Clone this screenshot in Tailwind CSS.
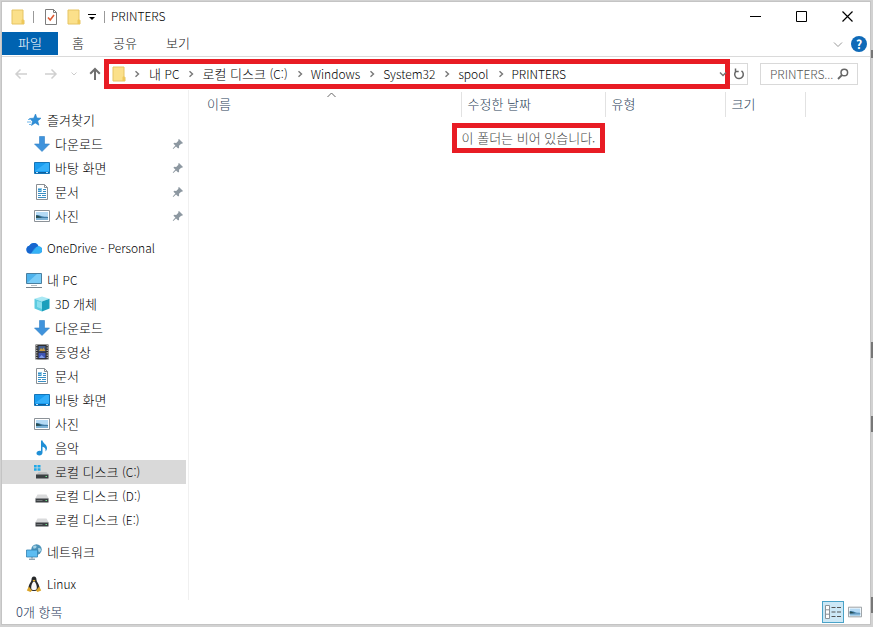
<!DOCTYPE html>
<html lang="ko">
<head>
    <meta charset="UTF-8">
    <meta name="viewport" content="width=device-width, initial-scale=1.0">
    <title>PRINTERS</title>
    <script src="https://cdn.jsdelivr.net/npm/@tailwindcss/browser@4"></script>
</head>
<body class="relative h-screen overflow-hidden bg-[#d2d2d2] pt-px pr-[2px] pb-[2px] pl-px font-['Noto_Sans_CJK_KR',sans-serif] text-[13px] leading-6 font-light text-black">
    <!-- icons -->
    <svg class="hidden">
        <symbol id="folder" viewBox="0 0 16 16">
            <path d="M2 1h11v9.500l1 1V15H2z" fill="#fbe08a" stroke="#e6c463" />
            <path d="M11.500 15v-4l1.500-1 1 1.500V15z" fill="#eec85a" />
        </symbol>
        <symbol id="next" viewBox="0 0 8 8">
            <path d="M2.500 1.200l3 2.800-3 2.800" fill="none" stroke="#777" stroke-width="1.400" />
        </symbol>
        <symbol id="star" viewBox="0 0 16 16">
            <path d="M9.500 2l1.400 4 4.100.2-3.300 2.700 1.200 4.300-3.700-2.300-3.700 2.600 1-4.300L3.500 6.500l4.200-.3z" fill="#2f8fd8" stroke="#2480c8" stroke-width=".6" />
            <path d="M2 7.500h3M1 10h4M3 12.500h2" stroke="#6fb6ea" />
        </symbol>
        <symbol id="download" viewBox="0 0 16 16">
            <path d="M5.500.5h5V8h5L8 15.500.5 8h5z" fill="#3f93dc" stroke="#2f7fc6" stroke-width=".6" />
        </symbol>
        <symbol id="desktop" viewBox="0 0 16 16">
            <path d="M.5 2.500h15v11H.5z" fill="#1a9df0" stroke="#1575b8" />
            <path d="M1 11L12 3h3v8z" fill="#35b0fa" />
            <path d="M1 12.500h14" stroke="#0f5f9c" />
            <path d="M2 12.500h2M12 12.500h2" stroke="#bfe3fa" />
        </symbol>
        <symbol id="document" viewBox="0 0 16 16">
            <path d="M2.500.5h8l3 3v12h-11z" fill="#fff" stroke="#8a8f94" />
            <path d="M10.500.5v3h3" fill="none" stroke="#8a8f94" />
            <path d="M4 4h4v4H4z" fill="#8cc8e8" />
            <path d="M4 5.500h3M9 5.500h3M4 7.500h3M9 7.500h3M4 9.500h8M4 11.500h3M8 11.500h4M4 13.500h8" stroke="#3b8fc4" />
        </symbol>
        <symbol id="picture" viewBox="0 0 16 16">
            <path d="M.5 2.500h15v11H.5z" fill="#fff" stroke="#8c9298" />
            <path d="M2 4h12v8H2z" fill="#b4daf5" />
            <path d="M2 7c3-.5 5 1 7 1.500s3 0 5 .5v1H2z" fill="#3f7ba6" />
            <path d="M2 7.500c2-.5 4 1 6 2l-6 .5z" fill="#274e52" />
            <path d="M2 10h12v2H2z" fill="#7fb3d6" />
        </symbol>
        <symbol id="pin" viewBox="0 0 12 12">
            <path d="M7 1l4 4-1 .8-.8-.1L7 7.800l.1 1.900-.9.900-2.200-2.200L1.300 11l-.6-.6L3.400 7.600 1.400 5.700l.9-.9 1.900.1L6.400 2.700 6.200 1.800z" fill="#8d98a1" />
        </symbol>
        <symbol id="cloud" viewBox="0 0 16 16">
            <path d="M4 13.500a4 4 0 0 1-.7-7.800A5 5 0 0 1 12.500 6.500a3.500 3.500 0 0 1 .5 7z" fill="#1e86e0" />
            <path d="M3.300 5.700A5 5 0 0 1 12.500 6.500C9 6.500 7.500 9 5 13.500H4a4 4 0 0 1-.7-7.800z" fill="#1766cf" />
            <path d="M5 13.500L10.500 7a3.600 3.600 0 0 1 5.300 4.500 3.200 3.200 0 0 1-2.800 2z" fill="#35b2f5" />
        </symbol>
        <symbol id="pc" viewBox="0 0 16 16">
            <path d="M.5 1.500h15v10H.5z" fill="#4db2ec" stroke="#4a7f9f" />
            <path d="M1 11L11 2h4v9z" fill="#7accf7" />
            <path d="M5 13.500h6" stroke="#b4bcc2" />
            <path d="M0 15.500h16" stroke="#78838b" />
        </symbol>
        <symbol id="cube" viewBox="0 0 16 16">
            <path d="M8 .5l7.500 2.300L8 5.500.5 2.800z" fill="#a9e8f4" />
            <path d="M.5 2.800L8 5.500v10L.5 12.600z" fill="#5ccbe0" />
            <path d="M15.500 2.800L8 5.500v10l7.500-2.900z" fill="#1c9fbc" />
            <path d="M3 5l5 1.500V13l-5-2z" fill="#8adfee" />
        </symbol>
        <symbol id="video" viewBox="0 0 16 16">
            <path d="M1.500.5h13v15h-13z" fill="#2e2e2e" />
            <path d="M2.800 1v15M13.200 1v15" stroke="#e8e8e8" stroke-dasharray="1.200 1.200" />
            <path d="M4.500 2h7v5.500h-7z" fill="#46608f" />
            <path d="M4.500 8.700h7v5.500h-7z" fill="#3d55b5" />
            <path d="M5 7l2-3 1.500 1.500 1-2L11.500 7z" fill="#c99b3f" />
            <path d="M5 14l2.500-3 3.500 3z" fill="#7e9be8" />
        </symbol>
        <symbol id="music" viewBox="0 0 16 16">
            <path d="M7 .5h1.500c.3 2.800 4.500 4 4.500 7.500 0 1.500-.6 2.600-1.500 3.500.6-3-.8-4.300-3-4.800v5.800c0 1.700-1.400 3-3.200 3S2.500 14.600 2.500 13.300s1.400-2.500 3-2.500c.6 0 1 .1 1.500.3z" fill="#1f8fd6" />
        </symbol>
        <symbol id="drive" viewBox="0 0 16 16">
            <path d="M3.500 6.500h9L15 11H1z" fill="#d9dadb" />
            <path d="M1.500 10.500h13v4h-13z" fill="#3b3f42" />
            <path d="M2.500 12.500h6" stroke="#75797c" />
            <path d="M11.500 12.500H13" stroke="#6fe08a" />
        </symbol>
        <symbol id="windrive" viewBox="0 0 16 16">
            <path d="M0 1h2.700v2.500H0zM3.500 1h3v2.500h-3zM0 4.300h2.700v2.500H0zM3.500 4.300h3v2.500h-3z" fill="#20a9e8" />
            <path d="M4.500 8h8l2.500 3H2z" fill="#bfc1c2" />
            <path d="M2 10.500h12.500v4H2z" fill="#3b3f42" />
            <path d="M11.500 12.500H13" stroke="#6fe08a" />
        </symbol>
        <symbol id="network" viewBox="0 0 16 16">
            <circle cx="10.500" cy="5.500" r="5.200" fill="#4c93b9" />
            <path d="M7 2.500c2-2 4-1 3.500.5S9 4.500 7.500 4.500zM12 4.500c1.500-1 3 0 3 1.500s-1.500 2.500-2.500 1.500z" fill="#a4d2e6" />
            <path d="M.5 6h11v7H.5z" fill="#5dbdf2" stroke="#3180b0" stroke-width=".8" />
            <path d="M6 13v1.500M3 15.200h6" stroke="#5d7f94" />
        </symbol>
        <symbol id="tux" viewBox="0 0 16 16">
            <path d="M8 .5c1.800 0 2.500 1.400 2.500 3.200 0 2.300 3 4.300 3 8.300 0 2-2 3-5.500 3s-5.500-1-5.500-3c0-4 3-6 3-8.300C5.500 1.900 6.200.5 8 .5z" fill="#26282a" />
            <path d="M8 5.500c1.200 0 2.800 3.500 2.800 6S9.500 14 8 14s-2.800 0-2.800-2.500 1.600-6 2.800-6z" fill="#f6f6f6" />
            <path d="M6.500 4.500L8 3.800l1.500.7L8 5.800z" fill="#e9b42c" />
            <path d="M2.800 10.500l3.200 4-1.500 1.500L.8 14.500zM13.200 10.500l-3.200 4 1.500 1.500 3.700-1.500z" fill="#dba52a" />
        </symbol>
    </svg>

    <!-- edges of whatever is behind the window -->
    <div class="absolute top-[50px] right-0 h-2 w-[2px] bg-[#777]"></div>
    <div class="absolute top-[342px] right-0 h-4 w-[2px] bg-[#777]"></div>
    <div class="absolute top-[416px] right-0 h-4 w-[2px] bg-[#777]"></div>
    <div class="absolute top-[597px] right-0 h-4 w-[2px] bg-[#777]"></div>

    <div class="flex h-full flex-col border border-[#c4c4c4] bg-white">
        <header class="flex h-[30px] shrink-0 items-center pl-2">
            <svg class="size-4"><use href="#folder" /></svg>
            <span class="ml-[7px] h-3 w-px bg-[#999]"></span>
            <button class="ml-[10px]" aria-label="속성">
                <svg class="h-4 w-[14px]" viewBox="0 0 14 16">
                    <path d="M1.500.5h8l3 3v12h-11z" fill="#fff" stroke="#7d7d7d" />
                    <path d="M9.500.5v3h3" fill="none" stroke="#7d7d7d" />
                    <path d="M4 8.500l2.200 2.500L10 6" fill="none" stroke="#dd5a32" stroke-width="1.600" />
                </svg>
            </button>
            <button class="ml-2" aria-label="새 폴더"><svg class="size-4"><use href="#folder" /></svg></button>
            <button class="ml-[6px]" aria-label="빠른 실행 도구 모음 사용자 지정">
                <svg class="size-2" viewBox="0 0 8 8"><path d="M0 1.500h8" stroke="#000" /><path d="M1 4h6L4 7z" /></svg>
            </button>
            <span class="ml-2 h-3 w-px bg-[#999]"></span>
            <h1 class="ml-[6px] pb-[2px] text-xs leading-5">PRINTERS</h1>
            <div class="ml-auto flex h-full pb-[2px]">
                <button class="flex w-[46px] items-center justify-center" aria-label="최소화"><svg class="size-[11px]" viewBox="0 0 11 11"><path d="M0 5.500h11" stroke="#000" /></svg></button>
                <button class="flex w-[46px] items-center justify-center" aria-label="최대화"><svg class="size-[11px]" viewBox="0 0 11 11"><path d="M.5.5h10v10H.5z" fill="none" stroke="#000" /></svg></button>
                <button class="flex w-[46px] items-center justify-center" aria-label="닫기"><svg class="size-[11px]" viewBox="0 0 11 11"><path d="M.5.5l10 10M10.500.5l-10 10" stroke="#000" stroke-width="1.200" /></svg></button>
            </div>
        </header>

        <div class="flex h-[25px] shrink-0 items-start border-b border-[#dadada] text-[#222]">
            <button class="h-[23px] w-14 bg-[#0063b1] pb-[2px] leading-5 text-white">파일</button>
            <button class="h-[23px] w-10 pb-[2px] leading-5">홈</button>
            <button class="h-[23px] w-[54px] pb-[2px] leading-5">공유</button>
            <button class="h-[23px] w-[52px] pb-[2px] leading-5">보기</button>
            <button class="mt-2 ml-auto" aria-label="리본 확장"><svg class="size-[10px]" viewBox="0 0 10 10"><path d="M1 2.500l4 4 4-4" fill="none" stroke="#999" /></svg></button>
            <button class="mt-1 mr-[3px] ml-2 size-4 rounded-full bg-[#0f6ab8] text-xs leading-4 font-bold text-white" aria-label="도움말">?</button>
        </div>

        <div class="flex h-[33px] shrink-0 items-center pr-3">
            <div class="flex w-[102px] shrink-0 items-center pl-3">
                <button aria-label="뒤로"><svg class="size-[14px]" viewBox="0 0 14 14"><path d="M13 7H2M6.500 2.500L2 7l4.500 4.500" fill="none" stroke="#d0d0d0" stroke-width="1.500" /></svg></button>
                <button class="ml-4" aria-label="앞으로"><svg class="size-[14px]" viewBox="0 0 14 14"><path d="M1 7h11M7.500 2.500L12 7l-4.500 4.500" fill="none" stroke="#d0d0d0" stroke-width="1.500" /></svg></button>
                <button class="ml-3" aria-label="최근 위치"><svg class="size-2" viewBox="0 0 8 8"><path d="M1.500 2.500L4 5l2.500-2.500" fill="none" stroke="#ccc" /></svg></button>
                <button class="ml-[10px]" aria-label="위로"><svg class="size-[14px]" viewBox="0 0 14 14"><path d="M7 13V2M2.200 6.800L7 2l4.800 4.800" fill="none" stroke="#707070" stroke-width="2" /></svg></button>
            </div>
            <nav class="flex h-[30px] min-w-0 flex-1 items-center border-[5px] border-[#e81c24] pl-[2px] whitespace-nowrap" aria-label="주소">
                <svg class="size-4 shrink-0"><use href="#folder" /></svg>
                <svg class="mr-2 ml-[6px] size-2"><use href="#next" /></svg>
                <a href="#">내 <span class="text-xs">PC</span></a>
                <svg class="mr-[7px] ml-2 size-2"><use href="#next" /></svg>
                <a href="#">로컬 디스크 <span class="text-xs">(C:)</span></a>
                <svg class="mr-[7px] ml-2 size-2"><use href="#next" /></svg>
                <a class="text-xs" href="#">Windows</a>
                <svg class="mr-[7px] ml-2 size-2"><use href="#next" /></svg>
                <a class="text-xs" href="#">System32</a>
                <svg class="mr-[7px] ml-2 size-2"><use href="#next" /></svg>
                <a class="text-xs" href="#">spool</a>
                <svg class="mr-[7px] ml-2 size-2"><use href="#next" /></svg>
                <a class="text-xs" href="#">PRINTERS</a>
                <button class="-mr-[2px] ml-auto" aria-label="이전 위치"><svg class="size-2" viewBox="0 0 8 8"><path d="M1 2.500l3 3 3-3" fill="none" stroke="#777" stroke-width="1.500" /></svg></button>
            </nav>
            <button class="flex h-[22px] w-[18px] items-center justify-center border border-l-0 border-[#d9d9d9]" aria-label="새로 고침">
                <svg class="size-3" viewBox="0 0 12 12"><path d="M3 3.200A4.300 4.300 0 1 0 8.500 2.800M2.500.5v3h3.200" fill="none" stroke="#666" stroke-width="1.500" /></svg>
            </button>
            <label class="ml-3 flex h-[22px] w-[98px] items-center border border-[#d9d9d9] pr-2 pl-[9px]">
                <input class="w-0 min-w-0 flex-1 text-xs outline-none placeholder:text-[#555]" type="text" placeholder="PRINTERS..." aria-label="PRINTERS 검색">
                <svg class="size-3 shrink-0" viewBox="0 0 12 12"><circle cx="7.300" cy="4.500" r="3.300" fill="none" stroke="#666" stroke-width="1.500" /><path d="M5 7L1 11" stroke="#666" stroke-width="1.800" /></svg>
            </label>
        </div>

        <div class="flex min-h-0 flex-1">
            <nav class="w-[187px] shrink-0 border-r border-[#f0f0f0] pt-[18px] pr-[2px]" aria-label="탐색 창">
                <a class="flex h-6 items-center gap-[5px] pl-6" href="#"><svg class="size-4"><use href="#star" /></svg>즐겨찾기</a>
                <a class="flex h-6 items-center gap-[5px] pr-[2px] pl-8" href="#"><svg class="size-4"><use href="#download" /></svg>다운로드<svg class="ml-auto size-3"><use href="#pin" /></svg></a>
                <a class="flex h-6 items-center gap-[5px] pr-[2px] pl-8" href="#"><svg class="size-4"><use href="#desktop" /></svg>바탕 화면<svg class="ml-auto size-3"><use href="#pin" /></svg></a>
                <a class="flex h-6 items-center gap-[5px] pr-[2px] pl-8" href="#"><svg class="size-4"><use href="#document" /></svg>문서<svg class="ml-auto size-3"><use href="#pin" /></svg></a>
                <a class="flex h-6 items-center gap-[5px] pr-[2px] pl-8" href="#"><svg class="size-4"><use href="#picture" /></svg>사진<svg class="ml-auto size-3"><use href="#pin" /></svg></a>

                <a class="mt-2 flex h-6 items-center gap-[5px] pl-6 text-xs leading-6" href="#"><svg class="size-4"><use href="#cloud" /></svg>OneDrive - Personal</a>

                <a class="mt-2 flex h-6 items-center gap-[5px] pl-6" href="#"><svg class="size-4"><use href="#pc" /></svg><span>내 <span class="text-xs">PC</span></span></a>
                <a class="flex h-6 items-center gap-[5px] pl-8" href="#"><svg class="size-4"><use href="#cube" /></svg><span><span class="text-xs">3D</span> 개체</span></a>
                <a class="flex h-6 items-center gap-[5px] pl-8" href="#"><svg class="size-4"><use href="#download" /></svg>다운로드</a>
                <a class="flex h-6 items-center gap-[5px] pl-8" href="#"><svg class="size-4"><use href="#video" /></svg>동영상</a>
                <a class="flex h-6 items-center gap-[5px] pl-8" href="#"><svg class="size-4"><use href="#document" /></svg>문서</a>
                <a class="flex h-6 items-center gap-[5px] pl-8" href="#"><svg class="size-4"><use href="#desktop" /></svg>바탕 화면</a>
                <a class="flex h-6 items-center gap-[5px] pl-8" href="#"><svg class="size-4"><use href="#picture" /></svg>사진</a>
                <a class="flex h-6 items-center gap-[5px] pl-8" href="#"><svg class="size-4"><use href="#music" /></svg>음악</a>
                <a class="flex h-6 items-center gap-[5px] bg-[#d9d9d9] pl-8" href="#"><svg class="size-4"><use href="#windrive" /></svg><span>로컬 디스크 <span class="text-xs">(C:)</span></span></a>
                <a class="flex h-6 items-center gap-[5px] pl-8" href="#"><svg class="size-4"><use href="#drive" /></svg><span>로컬 디스크 <span class="text-xs">(D:)</span></span></a>
                <a class="flex h-6 items-center gap-[5px] pl-8" href="#"><svg class="size-4"><use href="#drive" /></svg><span>로컬 디스크 <span class="text-xs">(E:)</span></span></a>

                <a class="mt-2 flex h-6 items-center gap-[5px] pl-6" href="#"><svg class="size-4"><use href="#network" /></svg>네트워크</a>
                <a class="mt-2 flex h-6 items-center gap-[5px] pl-6 text-xs leading-6" href="#"><svg class="size-4"><use href="#tux" /></svg>Linux</a>
            </nav>

            <main class="min-w-0 flex-1 pt-[2px]">
                <table class="w-full table-fixed">
                    <thead class="text-left leading-5 text-[#2b3f58]">
                        <tr class="h-[25px]">
                            <th class="relative w-[272px] border-r border-[#e2e2e2] p-0 pb-[2px] pl-[18px] font-light">이름
                                <svg class="absolute top-0 left-[138px] h-[6px] w-[9px]" viewBox="0 0 9 6"><path d="M.5 5l4-4 4 4" fill="none" stroke="#666" /></svg>
                            </th>
                            <th class="w-36 border-r border-[#e2e2e2] p-0 pb-[2px] pl-[6px] font-light">수정한 날짜</th>
                            <th class="w-[120px] border-r border-[#e2e2e2] p-0 pb-[2px] pl-[6px] font-light">유형</th>
                            <th class="w-20 border-r border-[#e2e2e2] p-0 pb-[2px] pl-[6px] font-light">크기</th>
                            <th class="p-0"></th>
                        </tr>
                    </thead>
                    <tbody>
                        <tr>
                            <td colspan="5" class="p-0 pt-[6px] pr-[2px] text-center">
                                <p class="inline-block border-[5px] border-[#e81c24] px-[5px] leading-5 text-[#444]">이 폴더는 비어 있습니다.</p>
                            </td>
                        </tr>
                    </tbody>
                </table>
            </main>
        </div>

        <footer class="flex h-6 shrink-0 items-center pl-[14px] text-[#1e395b]">
            <span>0개 항목</span>
            <button class="ml-auto flex size-[22px] items-center justify-center border border-[#4aa3c8] bg-[#cce8f6]" aria-label="자세히">
                <svg class="size-4" viewBox="0 0 16 14"><path d="M.5.5h4v13h-4zM.5 4.800h4M.5 9.200h4" fill="#fff" stroke="#8a9298" /><path d="M6.500 2.500h4M12 2.500h4M6.500 7h4M12 7h4M6.500 11.500h4M12 11.500h4" stroke="#555" /></svg>
            </button>
            <button class="mr-1 flex size-[22px] items-center justify-center" aria-label="큰 아이콘"><svg class="size-[14px]"><use href="#picture" /></svg></button>
        </footer>
    </div>
</body>
</html>
